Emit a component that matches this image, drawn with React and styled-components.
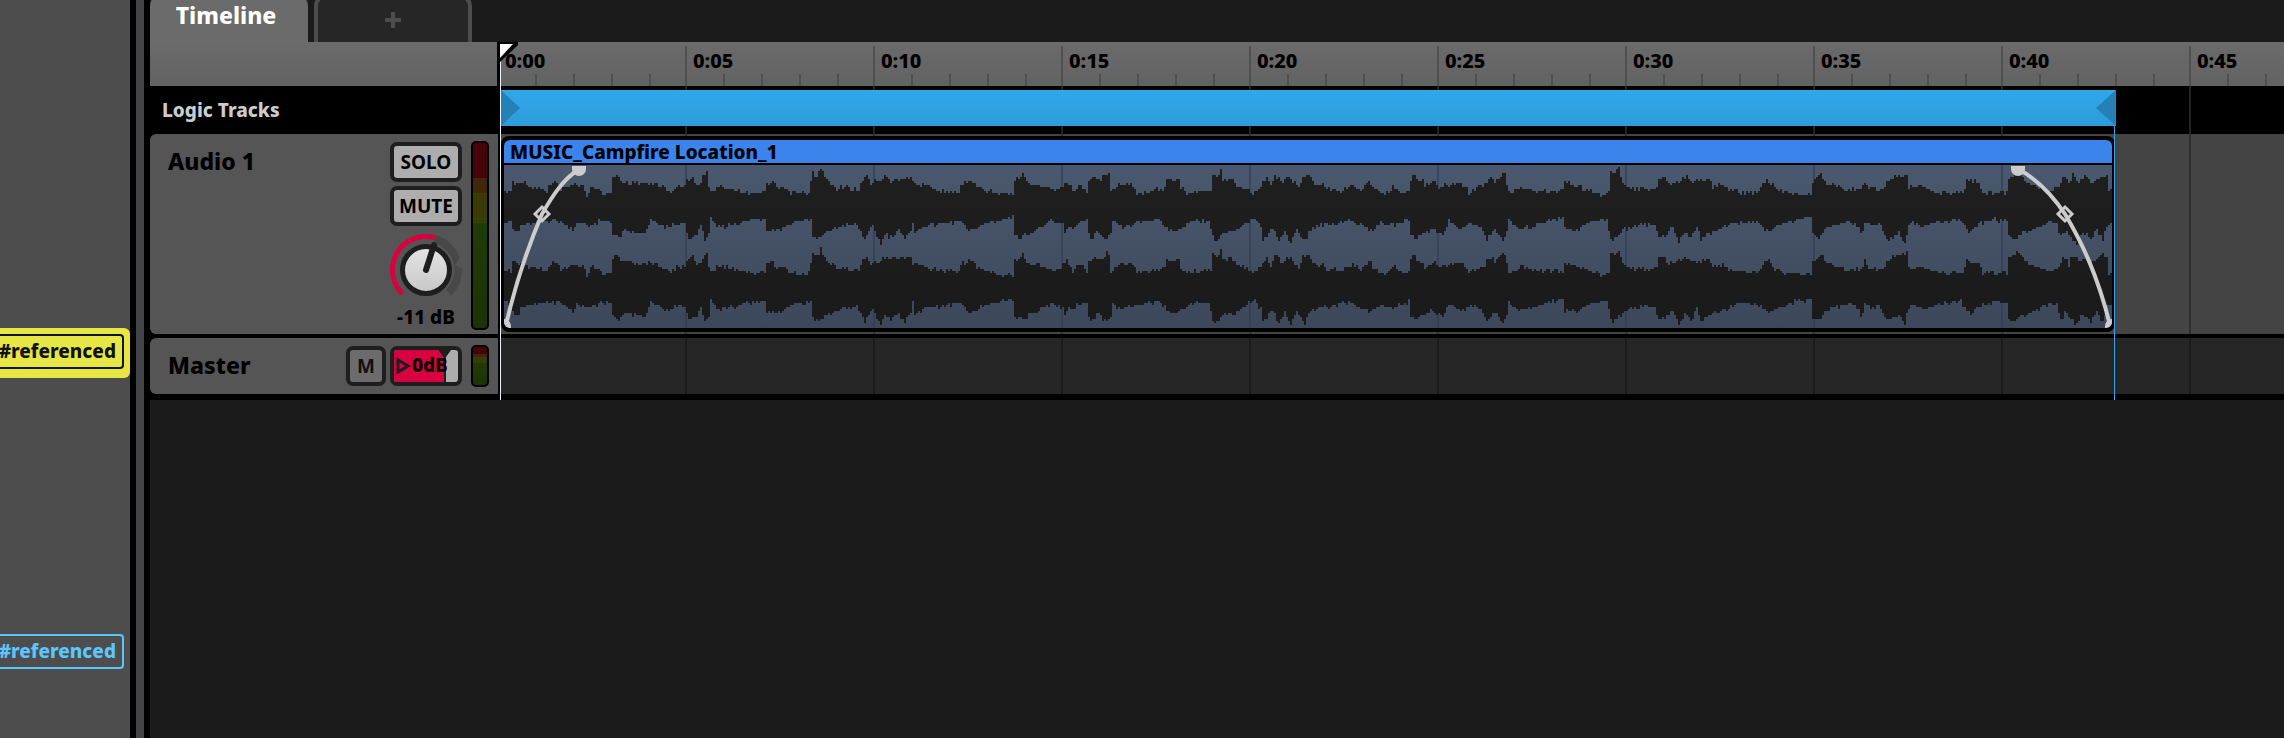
import React from 'react';
import styled, { createGlobalStyle, css } from 'styled-components';

const GlobalStyle = createGlobalStyle`
  *, *::before, *::after { box-sizing: border-box; }
  body {
    margin: 0;
    background: #1b1b1b;
    color: #000;
    font-family: "Noto Sans", "Open Sans", sans-serif;
    font-weight: 800;
    font-size: 20px;
    line-height: 24px;
    overflow: hidden;
  }
  h2, h3, h4 { font-weight: inherit; }
  button, input { font: inherit; margin: 0; }
`;

const SECONDS_5 = 188;
const LANE_START = 3;

const Shell = styled.div`
  display: flex;
  min-height: 100vh;
  background: #000;
`;

const SidePanel = styled.aside`
  flex: none;
  width: 130px;
  padding-top: 328px;
  background: #4d4d4d;
  overflow: hidden;
`;

const TagList = styled.ul`
  display: flex;
  flex-direction: column;
  gap: 250px;
  margin: 0;
  padding: 0;
  list-style: none;
`;

const TagRow = styled.li`
  display: flex;
  justify-content: flex-end;
  height: 50px;
  padding: 6px;
  border-radius: 0 6px 6px 0;
  background: ${(p) => (p.$selected ? '#e6e645' : 'transparent')};
  color: ${(p) => (p.$selected ? '#111' : '#5bc6ff')};
`;

const Tag = styled.a`
  flex: none;
  height: 35px;
  padding: 3px 6px;
  border: 2px solid currentColor;
  border-radius: 4px;
  color: inherit;
  text-decoration: none;
  font-size: 19px;
`;

const Divider = styled.div`
  flex: none;
  width: 20px;
  border: solid #000;
  border-width: 0 6px;
  background: #414546;
`;

const Editor = styled.main`
  flex: 1;
  min-width: 0;
  display: flex;
  flex-direction: column;
  background: #1b1b1b;
`;

const TabBar = styled.div`
  display: flex;
  gap: 6px;
  height: 42px;
  overflow: hidden;
`;

const Tab = styled.button`
  width: 158px;
  height: 48px;
  margin-top: -6px;
  padding: 0;
  display: flex;
  align-items: center;
  justify-content: center;
  border-radius: 12px 12px 0 0;
  ${(p) =>
    p.$active
      ? css`
          border: 0;
          padding: 0 6px 6px 0;
          background: #6b6b6b;
          color: #fff;
          font-size: 23px;
        `
      : css`
          border: 4px solid #4d4d4d;
          border-bottom: 0;
          background: #262626;
          color: #4d4d4d;
        `}
`;

const Arrangement = styled.div`
  display: flex;
  background: #000;
`;

const Headers = styled.div`
  flex: none;
  width: 350px;
`;

const RulerSpacer = styled.div`
  height: 44px;
  margin-right: 3px;
  background: linear-gradient(#6b6b6b, #626262);
`;

const LogicLabel = styled.h2`
  display: flex;
  align-items: center;
  height: 48px;
  margin: 0;
  padding-left: 12px;
  color: #ccc;
  font-size: 19px;
`;

const TrackHeader = styled.section`
  display: flex;
  align-items: flex-start;
  gap: 4px;
  margin: 0 2px ${(p) => (p.$last ? 6 : 4)}px 0;
  height: ${(p) => (p.$last ? 56 : 200)}px;
  padding: 8px 9px 4px 18px;
  border-radius: 6px 0 0 6px;
  background: #555;
`;

const TrackName = styled.h3`
  flex: 1;
  margin: 0;
  padding-top: 4px;
  font-size: 23px;
  line-height: 30px;
`;

const Controls = styled.div`
  width: 72px;
  display: flex;
  flex-direction: column;
  align-items: center;
  gap: 4px;
`;

const PadButton = styled.button`
  width: ${(p) => (p.$small ? 40 : 72)}px;
  height: 40px;
  padding: 0;
  border: 4px solid #1e1e1e;
  border-radius: 7px;
  background: ${(p) => (p.$small ? '#6c6c6c' : '#adadad')};
  color: ${(p) => (p.$small ? '#111' : '#000')};
  font-size: 19px;
  font-weight: 700;
  line-height: 32px;
`;

const Dial = styled.label`
  position: relative;
  display: block;
  width: 72px;
  height: 72px;
  margin-top: 4px;
  svg { display: block; }
`;

const HiddenRange = styled.input`
  position: absolute;
  inset: 0;
  width: 100%;
  height: 100%;
  opacity: 0;
`;

const Level = styled.output`
  font-size: 19px;
  line-height: 24px;
  margin-top: -5px;
  white-space: nowrap;
`;

const Fader = styled.label`
  position: relative;
  display: block;
  width: 72px;
  height: 40px;
  border: 4px solid #1e1e1e;
  border-radius: 7px;
  background: #adadad;
  overflow: hidden;
  svg { display: block; }
`;

const FaderValue = styled.span`
  position: absolute;
  left: 18px;
  top: 0;
  font-size: 19px;
  line-height: 30px;
`;

const Meter = styled.div`
  width: 18px;
  height: ${(p) => (p.$short ? 42 : 189)}px;
  margin: -1px 0 0 5px;
  border: 2px solid #000;
  border-radius: 5px;
  background: linear-gradient(
    #45040a 19%, #41260a 19% 27%, #3b3b08 27% ${(p) => (p.$short ? 40 : 43)}%, #1f3c06 43%, #1c3306
  );
`;

const Lanes = styled.div`
  position: relative;
  flex: 1;
  min-width: 0;
  overflow: hidden;
`;

const Ruler = styled.div`
  display: flex;
  height: 44px;
  background: linear-gradient(#6b6b6b, #626262);
  overflow: hidden;
`;

const RulerMark = styled.div`
  flex: none;
  width: ${SECONDS_5}px;
  display: flex;
  flex-direction: column;
  justify-content: space-between;
  padding-top: 4px;
  background: linear-gradient(#505050, #505050) no-repeat 0 4px / 2px 100%;
  &:first-child { margin-left: -${LANE_START}px; }
`;

const TimeLabel = styled.time`
  padding: 3px 0 0 8px;
  font-size: 20px;
  line-height: 24px;
`;

const MinorTicks = styled.div`
  display: flex;
  height: 12px;
  span { flex: none; width: 38px; }
  span + span { border-left: 2px solid #505050; }
`;

const gridLines = (color, offset = LANE_START) => css`
  background-image: repeating-linear-gradient(90deg, ${color} 0 2px, transparent 2px ${SECONDS_5}px);
  background-position: -${offset}px 0;
  background-size: calc(100% + ${offset}px) 100%;
  background-repeat: no-repeat;
`;

const LogicLane = styled.div`
  height: 48px;
  padding: 4px 0 0 1px;
  background-color: #000;
  ${gridLines('#242424')}
`;

const LoopRange = styled.div`
  display: flex;
  justify-content: space-between;
  width: 1615px;
  height: 36px;
  background: linear-gradient(#30a8ea, #2d9cda);
  svg { display: block; }
`;

const AudioLane = styled.div`
  height: 200px;
  margin-bottom: 4px;
  padding: 2px 0 2px 1px;
  background-color: #444;
  ${gridLines('#303030')}
`;

const MasterLane = styled.div`
  height: 56px;
  margin-bottom: 6px;
  background-color: #262626;
  ${gridLines('#1b1b1b')}
`;

const Clip = styled.article`
  width: 1614px;
  height: 196px;
  padding: 4px 3px;
  border-radius: 8px;
  background: #000;
`;

const ClipTitle = styled.h4`
  height: 23px;
  margin: 0;
  padding-left: 6px;
  border-radius: 6px 6px 0 0;
  background: #3a84ec;
  font-size: 19px;
  line-height: 25px;
  white-space: nowrap;
`;

const ClipBody = styled.div`
  margin-top: 2px;
  height: 163px;
  border-radius: 0 0 6px 6px;
  background-color: #445063;
  background-image: repeating-linear-gradient(90deg, #2a384e88 0 2px, transparent 2px ${SECONDS_5}px),
    linear-gradient(#4a596f, #3d475a);
  background-position: -7px 0, 0 0;
  background-size: calc(100% + 7px) 100%, 100% 100%;
  overflow: hidden;
  svg { display: block; }
`;

const Playhead = styled.div`
  position: absolute;
  top: 0;
  bottom: 0;
  left: 0;
  width: 1px;
  background: #e8f4fb;
  svg { position: absolute; left: 0; top: 0; }
`;

const EndMarker = styled.div`
  position: absolute;
  top: 84px;
  bottom: 0;
  left: 1614px;
  width: 1px;
  background: #30a6e8;
`;

/* Waveform envelope: "column:level" pairs in steps of two pixels. */
const UPPER =
  '0:14 3:13 4:9 10:9 12:11 19:12 21:13 24:8 26:9 28:12 34:10 39:11 41:15 44:11 49:14 53:14 54:7 55:5 57:6 59:9 67:9 71:9 73:10 75:9 79:11 83:14 86:11 90:11 91:8 94:6 96:10 98:9 99:6 101:4 102:11 104:14 106:11 114:12 120:14 130:14 131:9 134:9 136:12 139:11 142:14 152:14 154:4 156:6 158:2 160:6 163:10 166:12 171:11 173:13 177:12 178:9 181:6 183:10 185:8 188:8 191:6 193:8 195:7 198:7 203:6 204:9 208:10 213:12 218:13 225:13 227:14 228:10 232:8 235:9 236:11 241:13 248:15 254:15 255:8 257:7 259:4 260:7 263:10 270:11 273:13 278:12 281:8 284:13 287:10 291:13 292:8 295:6 298:8 299:6 301:4 302:4 303:13 308:9 315:11 316:14 323:14 325:12 330:12 331:7 337:8 338:12 341:14 353:13 354:5 357:6 358:2 359:8 363:7 367:11 372:12 374:14 378:11 381:6 383:10 385:5 389:9 392:6 397:11 399:6 402:5 404:9 407:10 409:9 411:12 418:13 424:10 428:12 432:8 434:11 440:15 444:11 449:14 452:14 453:8 454:5 457:8 459:8 460:11 465:9 467:11 478:9 480:11 482:14 490:10 493:6 495:9 500:4 501:9 502:14 508:11 515:13 529:13 530:9 535:10 541:13 548:15 552:14 553:4 555:4 557:2 559:9 563:12 576:12 577:7 580:6 582:10 587:8 591:6 594:9 598:8 602:6 604:11 609:10 612:12 616:13 618:14 626:14 630:8 633:9 635:12 640:14 653:15 654:8 658:4 660:9 667:11 672:13 678:12 680:8 682:12 690:12 691:9 694:6 699:5 701:4 702:12 708:10 715:14 729:14 731:8 737:9 739:14 751:14 752:7 757:4 762:10 767:11 773:13 776:12 778:9 780:6 782:10 784:5 787:9 790:6 793:9 797:6 801:5 802:14 804:12';
const LOWER =
  '0:28 3:28 4:33 7:33 8:30 20:28 24:27 30:29 34:32 36:29 45:30 47:28 53:28 54:35 57:36 60:33 70:34 73:28 80:31 84:30 90:29 91:34 93:37 98:31 100:37 102:34 103:27 106:31 112:30 125:27 130:27 131:32 138:32 145:28 153:27 154:36 156:37 160:34 170:30 176:30 178:33 180:37 184:30 186:35 188:39 190:34 193:36 197:32 198:35 200:37 203:32 204:28 205:34 210:30 220:29 228:28 232:33 240:29 254:26 255:34 258:36 262:34 268:31 273:28 279:30 280:34 282:30 284:32 286:29 291:28 292:35 293:37 296:33 301:38 303:34 304:28 308:31 320:28 328:27 331:31 334:33 340:30 345:27 352:28 354:36 356:38 359:34 365:33 372:28 375:26 378:31 379:37 384:31 387:38 390:33 393:38 396:32 400:38 402:33 408:30 412:30 422:27 430:31 433:32 438:29 444:30 452:27 453:35 456:36 463:32 469:34 472:28 478:32 482:29 488:31 491:37 495:32 499:37 501:33 502:28 507:32 515:30 523:27 529:26 530:32 536:32 543:28 551:27 553:37 556:35 560:32 568:29 575:30 577:36 580:35 584:31 587:39 590:33 593:36 596:31 598:37 602:34 610:31 618:28 627:29 632:33 637:30 645:27 653:26 654:35 657:36 662:31 672:28 677:30 678:34 680:29 688:30 690:35 692:37 697:34 700:38 702:30 703:28 708:31 718:28 728:27 731:32 733:33 738:29 745:27 751:28 752:36 755:38 758:34 765:32 772:28 776:29 778:36 780:33 786:39 789:33 793:37 796:32 799:37 801:30 804:29';

const COLUMNS = 804;

function expand(text) {
  const keys = text.split(' ').map((k) => k.split(':').map(Number));
  const out = [];
  let i = 0;
  for (let c = 0; c < COLUMNS; c += 1) {
    while (i < keys.length - 2 && keys[i + 1][0] <= c) i += 1;
    const [c0, v0] = keys[i];
    const [c1, v1] = keys[i + 1];
    out.push(v0 + ((v1 - v0) * (c - c0)) / (c1 - c0));
  }
  return out;
}

const jitter = (c, seed) => {
  const n = Math.sin(c * 12.9898 + seed * 78.233) * 43758.5453;
  const r = n - Math.floor(n);
  return r < 0.14 ? -1.2 : r < 0.3 ? -0.6 : r < 0.8 ? 0 : 0.6;
};

function channelPath(shiftTop, shiftBottom, seed) {
  const top = expand(UPPER).map((v, c) => 2 * Math.round(v + shiftTop + jitter(c, seed)));
  const bottom = expand(LOWER).map((v, c) => 2 * Math.round(v + shiftBottom - jitter(c, seed + 1)));
  let d = `M0 ${top[0]}`;
  top.forEach((y, c) => { d += `V${y}H${c * 2 + 2}`; });
  for (let c = COLUMNS - 1; c >= 0; c -= 1) d += `V${bottom[c]}H${c * 2}`;
  return `${d}Z`;
}

const LEFT_CHANNEL = channelPath(0, 0, 1);
const RIGHT_CHANNEL = channelPath(40, 41, 5);

function Waveform() {
  return (
    <svg width="1608" height="163" viewBox="0 0 1608 163" role="img" aria-label="Stereo waveform with fades">
      <defs>
        <linearGradient id="wave" x1="0" y1="0" x2="0" y2="163" gradientUnits="userSpaceOnUse">
          <stop offset="0" stopColor="#1f1f1f" />
          <stop offset="1" stopColor="#1a1a1a" />
        </linearGradient>
      </defs>
      <g fill="url(#wave)" shapeRendering="crispEdges">
        <path d={LEFT_CHANNEL} />
        <path d={RIGHT_CHANNEL} />
      </g>
      <g fill="none" stroke="#ccc" strokeWidth="4">
        <path d="M2 160C12 116 24 82 38 49C50 28 60 14 75 4" />
        <path d="M1514 4C1533 14 1547 28 1561 49C1577 76 1593 108 1606 160" />
        <path d="M38 42L45 49L38 56L31 49Z" strokeWidth="3" />
        <path d="M1561 42L1568 49L1561 56L1554 49Z" strokeWidth="3" />
      </g>
      <g fill="#ccc">
        <path d="M68 1H82V4A7 7 0 0 1 68 4Z" />
        <path d="M1507 1H1521V4A7 7 0 0 1 1507 4Z" />
        <path d="M0 154A7 7 0 0 1 7 161V163H0Z" />
        <path d="M1608 154A7 7 0 0 0 1601 161V163H1608Z" />
      </g>
    </svg>
  );
}

function VolumeKnob() {
  return (
    <svg width="72" height="72" viewBox="0 0 72 72" aria-hidden="true">
      <defs>
        <linearGradient id="cap" x1="0" y1="0" x2="0" y2="1">
          <stop offset="0" stopColor="#e6e6e6" />
          <stop offset="1" stopColor="#c6c6c6" />
        </linearGradient>
      </defs>
      <path d="M45.300 1.300A36 36 0 0 1 69.500 23.500L65 31L72 35A36 36 0 0 1 61.500 61.500L56 56A28 28 0 0 0 44 9Z" fill="#484848" />
      <path d="M12.300 59.700A33.500 33.500 0 0 1 45 3.700" fill="none" stroke="#d90041" strokeWidth="5" />
      <circle cx="36" cy="36" r="23.500" fill="url(#cap)" stroke="#1e1e1e" strokeWidth="5" />
      <path d="M36 36L44 11" stroke="#1e1e1e" strokeWidth="6" strokeLinecap="round" />
    </svg>
  );
}

const TIMES = ['0:00', '0:05', '0:10', '0:15', '0:20', '0:25', '0:30', '0:35', '0:40', '0:45'];

export default function App() {
  return (
    <>
      <GlobalStyle />
      <Shell>
        <SidePanel>
          <TagList>
            <TagRow $selected><Tag href="#referenced">#referenced</Tag></TagRow>
            <TagRow><Tag href="#referenced">#referenced</Tag></TagRow>
          </TagList>
        </SidePanel>
        <Divider />
        <Editor>
          <TabBar>
            <Tab $active>Timeline</Tab>
            <Tab aria-label="Add tab">
              <svg width="16" height="16" viewBox="0 0 16 16">
                <path d="M8 0V16M0 8H16" stroke="currentColor" strokeWidth="4" />
              </svg>
            </Tab>
          </TabBar>
          <Arrangement>
            <Headers>
              <RulerSpacer />
              <LogicLabel>Logic Tracks</LogicLabel>
              <TrackHeader>
                <TrackName>Audio 1</TrackName>
                <Controls>
                  <PadButton>SOLO</PadButton>
                  <PadButton>MUTE</PadButton>
                  <Dial>
                    <VolumeKnob />
                    <HiddenRange type="range" min="-80" max="10" defaultValue="-11" aria-label="Audio 1 volume" />
                  </Dial>
                  <Level>-11 dB</Level>
                </Controls>
                <Meter />
              </TrackHeader>
              <TrackHeader $last>
                <TrackName>Master</TrackName>
                <PadButton $small>M</PadButton>
                <Fader>
                  <svg width="64" height="32" viewBox="0 0 64 32" aria-hidden="true">
                    <path d="M0 0H44L51 9V32H0Z" fill="#d90041" />
                    <path d="M44 0H57L52 7V32H50V8Z" fill="#1e1e1e" />
                    <path d="M4 10V22L14 16Z" fill="none" stroke="#1e1e1e" strokeWidth="3" />
                  </svg>
                  <FaderValue>0dB</FaderValue>
                  <HiddenRange type="range" min="-80" max="10" defaultValue="0" aria-label="Master volume" />
                </Fader>
                <Meter $short />
              </TrackHeader>
            </Headers>
            <Lanes>
              <Ruler>
                {TIMES.map((t) => (
                  <RulerMark key={t}>
                    <TimeLabel>{t}</TimeLabel>
                    <MinorTicks><span /><span /><span /><span /><span /></MinorTicks>
                  </RulerMark>
                ))}
              </Ruler>
              <LogicLane>
                <LoopRange>
                  <svg width="19" height="36" viewBox="0 0 19 36"><path d="M0 0L19 18L0 36Z" fill="#2580b6" /></svg>
                  <svg width="20" height="36" viewBox="0 0 20 36"><path d="M20 0L0 18L20 36Z" fill="#2580b6" /></svg>
                </LoopRange>
              </LogicLane>
              <AudioLane>
                <Clip>
                  <ClipTitle>MUSIC_Campfire Location_1</ClipTitle>
                  <ClipBody><Waveform /></ClipBody>
                </Clip>
              </AudioLane>
              <MasterLane />
              <EndMarker />
              <Playhead>
                <svg width="18" height="20" viewBox="0 0 18 20">
                  <path d="M0 0H18V3L0 20Z" fill="#000" />
                  <path d="M0 2H13L0 16Z" fill="#fff" />
                </svg>
              </Playhead>
            </Lanes>
          </Arrangement>
        </Editor>
      </Shell>
    </>
  );
}
